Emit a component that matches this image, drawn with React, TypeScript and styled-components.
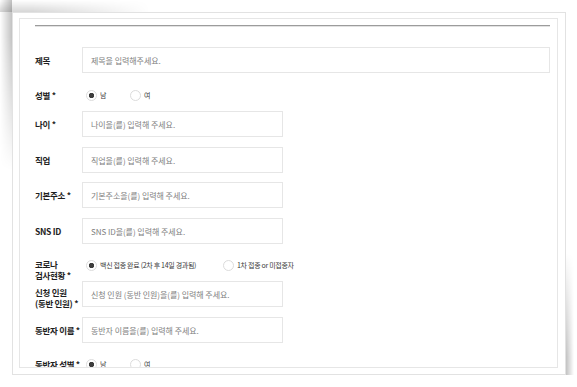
import React from "react";
import styled, { createGlobalStyle, css } from "styled-components";

const Global = createGlobalStyle`
  html { margin: 0; padding: 0; background: #fff; }
  body { margin: 0; padding: 0; background: transparent; font-family: "Noto Sans CJK KR", "Noto Sans", sans-serif; }
`;

const Page = styled.div`
  padding: 12px 0 0 12px;
`;

const Frame = styled.div`
  position: relative;
  width: 554px;
  height: 363px;
  box-sizing: border-box;
  border: 1px solid #e2e2e2;
  background: #fff;
  padding: 5px 7px 6px 6px;

  &::before {
    content: "";
    position: absolute;
    left: -13px;
    top: -13px;
    width: 150px;
    height: 170px;
    z-index: -1;
    background:
      linear-gradient(to right, rgba(0, 0, 0, 0), rgba(0, 0, 0, 0.24)) left top / 12px 100% no-repeat,
      linear-gradient(to bottom, rgba(0, 0, 0, 0), rgba(0, 0, 0, 0.16)) left top / 100% 12px no-repeat;
    -webkit-mask-image: radial-gradient(farthest-side at 8% 8%, #000 15%, transparent 100%);
    mask-image: radial-gradient(farthest-side at 8% 8%, #000 15%, transparent 100%);
  }

  &::after {
    content: "";
    position: absolute;
    right: -9px;
    bottom: -9px;
    width: 220px;
    height: 130px;
    z-index: -1;
    background:
      linear-gradient(to left, rgba(0, 0, 0, 0), rgba(0, 0, 0, 0.24)) right top / 8px 100% no-repeat,
      linear-gradient(to top, rgba(0, 0, 0, 0), rgba(0, 0, 0, 0.24)) left bottom / 100% 8px no-repeat;
    -webkit-mask-image: radial-gradient(farthest-side at 94% 94%, #000 15%, transparent 100%);
    mask-image: radial-gradient(farthest-side at 94% 94%, #000 15%, transparent 100%);
  }
`;

const Inner = styled.div`
  height: 100%;
  box-sizing: border-box;
  border: 1px solid #e6e6e6;
  overflow: hidden;
  padding: 6px 7px 0 15px;
`;

const Rule = styled.div`
  height: 1px;
  background: #9c9c9c;
  border-bottom: 1px solid #e2e2e2;
`;

const Row = styled.div<{ $mt: number; $h?: number; $top?: boolean }>`
  display: flex;
  align-items: ${(p) => (p.$top ? "flex-start" : "center")};
  margin-top: ${(p) => p.$mt}px;
  height: ${(p) => p.$h ?? 26}px;
`;

const Label = styled.div<{ $top?: boolean; $offset?: number }>`
  width: 47px;
  flex: none;
  font-size: 8.5px;
  font-weight: 700;
  color: #1e1e1e;
  white-space: nowrap;
  line-height: 11px;
  letter-spacing: -0.3px;
  ${(p) =>
    p.$top &&
    css`
      align-self: flex-start;
      margin-top: ${p.$offset ?? 0}px;
    `}
`;

const Field = styled.div<{ $wide?: boolean }>`
  box-sizing: border-box;
  height: 26px;
  width: ${(p) => (p.$wide ? "auto" : "201px")};
  flex: ${(p) => (p.$wide ? "1" : "none")};
  border: 1px solid #e6e6e6;
  padding-left: 8px;
  display: flex;
  align-items: center;
  font-size: 8px;
  color: #808080;
  white-space: nowrap;
  letter-spacing: -0.05px;
`;

const RadioGroup = styled.div`
  display: flex;
  align-items: center;
  padding-left: 4px;
  height: 12px;
`;

const RadioItem = styled.label<{ $w: number }>`
  display: flex;
  align-items: center;
  gap: 3px;
  width: ${(p) => p.$w}px;
  flex: none;
  font-size: 7px;
  color: #3a3a3a;
  white-space: nowrap;
  letter-spacing: -0.3px;
`;

const Dot = styled.span<{ $on?: boolean }>`
  width: 11px;
  height: 11px;
  flex: none;
  box-sizing: border-box;
  border-radius: 50%;
  border: 1px solid #dcdcdc;
  background: ${(p) =>
    p.$on ? "radial-gradient(circle, #3c3c3c 0 2.4px, #fff 3px)" : "#fff"};
`;

type Opt = { text: string; on?: boolean; w: number };

const Radios = ({ opts }: { opts: Opt[] }) => (
  <RadioGroup>
    {opts.map((o) => (
      <RadioItem key={o.text} $w={o.w}>
        <Dot $on={o.on} />
        {o.text}
      </RadioItem>
    ))}
  </RadioGroup>
);

const gender: Opt[] = [
  { text: "남", on: true, w: 44 },
  { text: "여", w: 30 },
];

export default function App() {
  return (
    <>
      <Global />
      <Page>
        <Frame>
          <Inner>
            <Rule />
            <Row $mt={20}>
              <Label>제목</Label>
              <Field $wide>제목을 입력해주세요.</Field>
            </Row>
            <Row $mt={12} $h={20}>
              <Label>성별 *</Label>
              <Radios opts={gender} />
            </Row>
            <Row $mt={6}>
              <Label>나이 *</Label>
              <Field>나이을(를) 입력해 주세요.</Field>
            </Row>
            <Row $mt={10}>
              <Label>직업</Label>
              <Field>직업을(를) 입력해 주세요.</Field>
            </Row>
            <Row $mt={9}>
              <Label>기본주소 *</Label>
              <Field>기본주소을(를) 입력해 주세요.</Field>
            </Row>
            <Row $mt={10}>
              <Label>SNS ID</Label>
              <Field>SNS ID을(를) 입력해 주세요.</Field>
            </Row>
            <Row $mt={15} $h={22} $top>
              <Label $top>
                코로나
                <br />
                검사현황 *
              </Label>
              <Radios
                opts={[
                  { text: "백신 접종 완료 (2차 후 14일 경과됨)", on: true, w: 137 },
                  { text: "1차 접종 or 미접종자", w: 90 },
                ]}
              />
            </Row>
            <Row $mt={0}>
              <Label $top $offset={6}>
                신청 인원
                <br />
                (동반 인원) *
              </Label>
              <Field>신청 인원 (동반 인원)을(를) 입력해 주세요.</Field>
            </Row>
            <Row $mt={10}>
              <Label>동반자 이름 *</Label>
              <Field>동반자 이름을(를) 입력해 주세요.</Field>
            </Row>
            <Row $mt={11} $h={20}>
              <Label>동반자 성별 *</Label>
              <Radios opts={gender} />
            </Row>
          </Inner>
        </Frame>
      </Page>
    </>
  );
}
